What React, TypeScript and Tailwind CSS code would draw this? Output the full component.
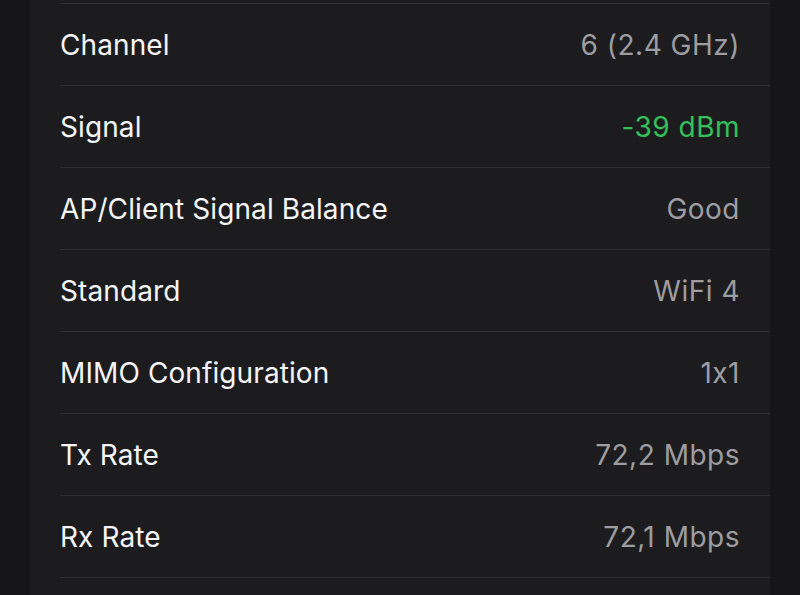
import React from "react";

const rows: { label: string; value: string; green?: boolean }[] = [
  { label: "Channel", value: "6 (2.4 GHz)" },
  { label: "Signal", value: "-39 dBm", green: true },
  { label: "AP/Client Signal Balance", value: "Good" },
  { label: "Standard", value: "WiFi 4" },
  { label: "MIMO Configuration", value: "1x1" },
  { label: "Tx Rate", value: "72,2 Mbps" },
  { label: "Rx Rate", value: "72,1 Mbps" },
];

export default function App() {
  return (
    <div
      className="h-[595px] w-[800px] overflow-hidden bg-[#151517] px-[30px]"
      style={{ fontFamily: "Inter, 'Noto Sans', sans-serif", fontFeatureSettings: "'calt' 0" }}
    >
      <div className="h-full bg-[#1c1c1f] pl-[30px] pt-[3px]">
        {rows.map((r) => (
          <div
            key={r.label}
            className="flex h-[82px] items-center justify-between border-t border-[#2e2e31] pr-[30px] text-[28px] tracking-[0.1px]"
          >
            <span className="text-[#f5f5f7]">{r.label}</span>
            <span className={(r.green ? "text-[#34c05a]" : "text-[#9c9ca1]") + " tracking-[0.5px]"}>{r.value}</span>
          </div>
        ))}
        <div className="h-[82px] border-t border-[#2e2e31]" />
      </div>
    </div>
  );
}
